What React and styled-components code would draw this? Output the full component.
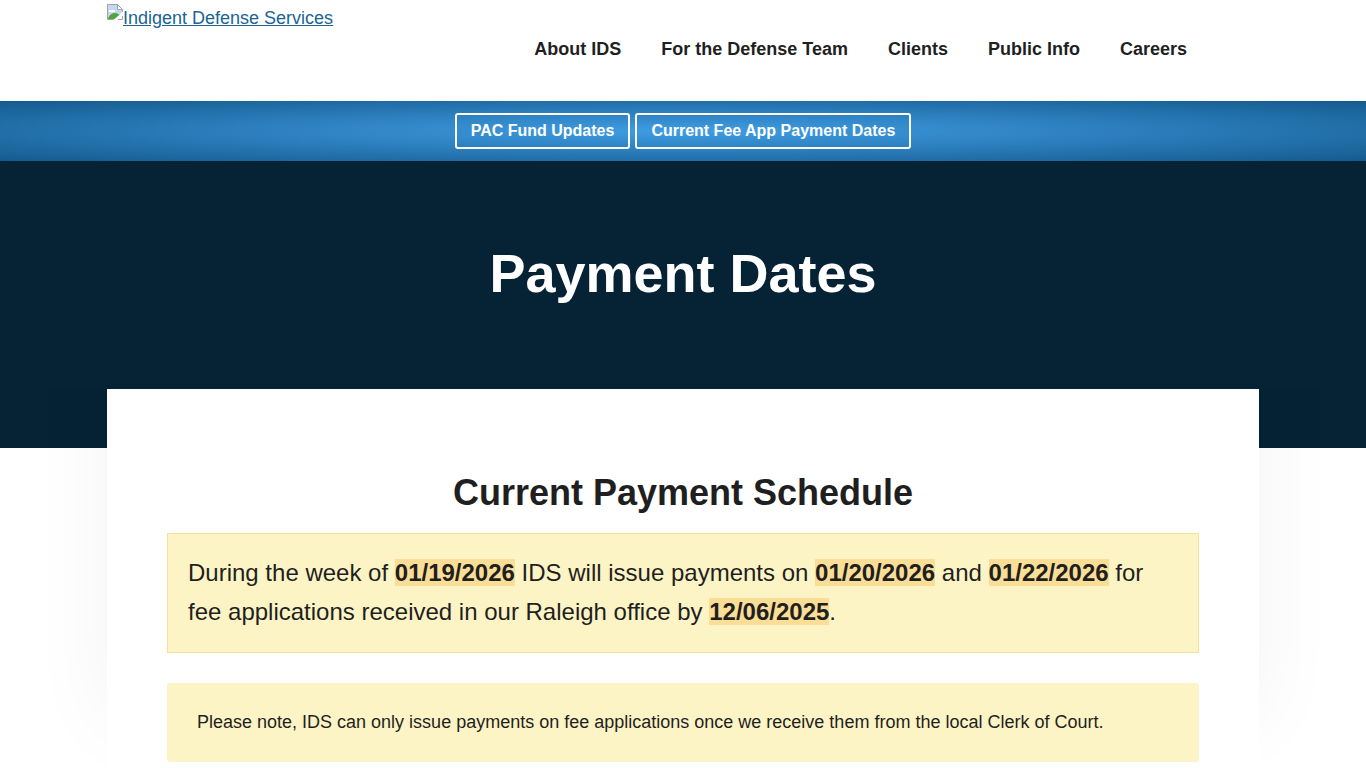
import React from 'react'
import styled, { createGlobalStyle } from 'styled-components'

const GlobalStyle = createGlobalStyle`
* {
  box-sizing: border-box;
}
body {
  margin: 0;
  background: #fff;
  color: #1f1f1f;
  font-family: "Liberation Sans", Arial, sans-serif;
  font-size: 18px;
  line-height: 31px;
}
`
const Header = styled.header`
background: #fff;
`
const HeaderInner = styled.div`
display: flex;
justify-content: space-between;
align-items: flex-start;
max-width: 1152px;
min-height: 101px;
margin: 0 auto;

@media (max-width: 960px) {
  flex-direction: column;
  padding: 0 1rem;
}
`
const Logo = styled.a`
display: flex;
align-items: flex-start;
padding-top: 4px;
color: #1a6496;
line-height: 28px;
text-decoration: none;
`
const LogoText = styled.span`
text-decoration: underline;
`
const Nav = styled.nav`
padding: 34px 52px 0 0;
`
const NavList = styled.ul`
display: flex;
flex-wrap: wrap;
margin: 0;
padding: 0;
list-style: none;
`
const NavLink = styled.a`
display: block;
padding: 0 20px;
color: #1f1f1f;
font-weight: 700;
text-decoration: none;
`
const Banner = styled.section`
display: flex;
flex-wrap: wrap;
justify-content: center;
gap: 5px;
padding: 12px;
background: radial-gradient(#3f9de3 0%, #155a8f 100%);
`
const BannerLink = styled.a`
padding: 0 14px;
border: 2px solid #fff;
border-radius: 3px;
color: #fff;
font-size: 16px;
font-weight: 700;
line-height: 32px;
text-decoration: none;
`
const Hero = styled.section`
padding: 80px 20px 142px;
background: #052335;
text-align: center;
`
const H1 = styled.h1`
margin: 0;
color: #fff;
font-size: 54px;
font-weight: 700;
line-height: 65px;
`
const Entry = styled.main`
position: relative;
max-width: 1152px;
margin: -59px auto 60px;
padding: 80px 60px 60px;
background: #fff;
box-shadow: 0 -100px 80px rgba(0, 0, 0, .05);
clip-path: inset(0 -100px);

@media (max-width: 768px) {
  padding: 40px 20px;
}
`
const H2 = styled.h2`
margin: 0 0 16px;
font-size: 36px;
font-weight: 700;
line-height: 48px;
text-align: center;
`
const Schedule = styled.p`
margin: 0 0 30px;
padding: 19px 20px 21px;
border: 1px solid #f6e19c;
background: #fdf4c5;
font-size: 24px;
line-height: 39px;
`
const DateMark = styled.mark`
background: #fade96;
color: inherit;
font-weight: 700;
`
const Note = styled.p`
margin: 0;
padding: 24px 30px;
border-radius: 3px;
background: #fdf4c5;
`

const navItems = ['About IDS', 'For the Defense Team', 'Clients', 'Public Info', 'Careers']

const LogoIcon = () => (
  <svg width="16" height="16" viewBox="0 0 16 16" aria-hidden="true">
    <path d="M.5 .5H10.5L15.5 5.5V10L11 13.5L7 15.5H.5Z" fill="#c5d7f5" />
    <path d="M1.5 8C1.5 5.8 4 5.5 4.5 6.5C6 5 8.5 6 8 8Z" fill="#fff" />
    <path d="M1 15C2 11 5 9 8 9C10 9 12 10 13 11.5L8 15Z" fill="#4ea63b" />
    <path d="M16 7.5L6.5 16H9L16 10Z" fill="#fff" />
    <path d="M.5 15.5V.5H10.5L15.5 5.5V8M.5 15.5H6.5M11 15.5H15.5V12" fill="none" stroke="#a3a3a3" />
    <path d="M10.5 .5V5.5H15.5Z" fill="#fff" stroke="#a3a3a3" />
  </svg>
)

const App = () => {
  return (
    <>
    <GlobalStyle />
    <Header>
      <HeaderInner>
        <Logo href="#">
          <LogoIcon />
          <LogoText>Indigent Defense Services</LogoText>
        </Logo>
        <Nav aria-label="Main">
          <NavList>
            {navItems.map(item => (
              <li key={item}><NavLink href="#">{item}</NavLink></li>
            ))}
          </NavList>
        </Nav>
      </HeaderInner>
    </Header>
    <Banner>
      <BannerLink href="#">PAC Fund Updates</BannerLink>
      <BannerLink href="#">Current Fee App Payment Dates</BannerLink>
    </Banner>
    <Hero>
      <H1>Payment Dates</H1>
    </Hero>
    <Entry>
      <H2>Current Payment Schedule</H2>
      <Schedule>
        During the week of <DateMark>01/19/2026</DateMark> IDS will issue payments
        on <DateMark>01/20/2026</DateMark> and <DateMark>01/22/2026</DateMark> for
        fee applications received in our Raleigh office by <DateMark>12/06/2025</DateMark>.
      </Schedule>
      <Note>
        Please note, IDS can only issue payments on fee applications once we receive
        them from the local Clerk of Court.
      </Note>
    </Entry>
    </>
  )
}

export default App
